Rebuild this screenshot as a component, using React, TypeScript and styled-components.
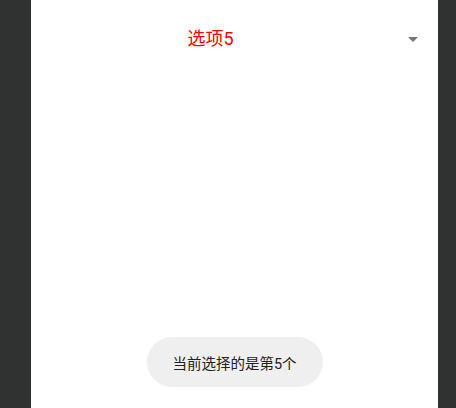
import React from "react";
import styled, { createGlobalStyle } from "styled-components";

const Global = createGlobalStyle`
  html, body { margin: 0; padding: 0; height: 100%; }
  body { background: #303231; font-family: Roboto, "Noto Sans CJK SC", sans-serif; }
  #root { height: 100%; }
`;

const Screen = styled.div`
  height: 100%;
  display: flex;
  justify-content: center;
`;

const Panel = styled.div`
  position: relative;
  width: 407px;
  margin-left: 31px;
  margin-right: 18px;
  background: #ffffff;
  display: flex;
  flex-direction: column;
`;

const SpinnerRow = styled.div`
  height: 78px;
  display: flex;
  align-items: center;
`;

const Label = styled.div`
  flex: 1;
  text-align: center;
  color: #ff0000;
  font-size: 18px;
  line-height: 24px;
  padding-left: 1px;
`;

const ArrowBox = styled.div`
  width: 49px;
  display: flex;
  align-items: center;
  justify-content: flex-start;
  padding-left: 19px;
  box-sizing: border-box;
`;

const Triangle = styled.div`
  width: 0;
  height: 0;
  border-left: 5px solid transparent;
  border-right: 5px solid transparent;
  border-top: 5px solid #777777;
`;

const Toast = styled.div`
  position: absolute;
  left: 50%;
  bottom: 21px;
  transform: translateX(-50%);
  height: 50px;
  padding: 0 26px;
  border-radius: 25px;
  background: #efefef;
  color: #222222;
  font-size: 14.5px;
  display: flex;
  align-items: center;
  white-space: nowrap;
`;

export default function App() {
  return (
    <>
      <Global />
      <Screen>
        <Panel>
          <SpinnerRow>
            <Label>选项5</Label>
            <ArrowBox>
              <Triangle />
            </ArrowBox>
          </SpinnerRow>
          <Toast>当前选择的是第5个</Toast>
        </Panel>
      </Screen>
    </>
  );
}
